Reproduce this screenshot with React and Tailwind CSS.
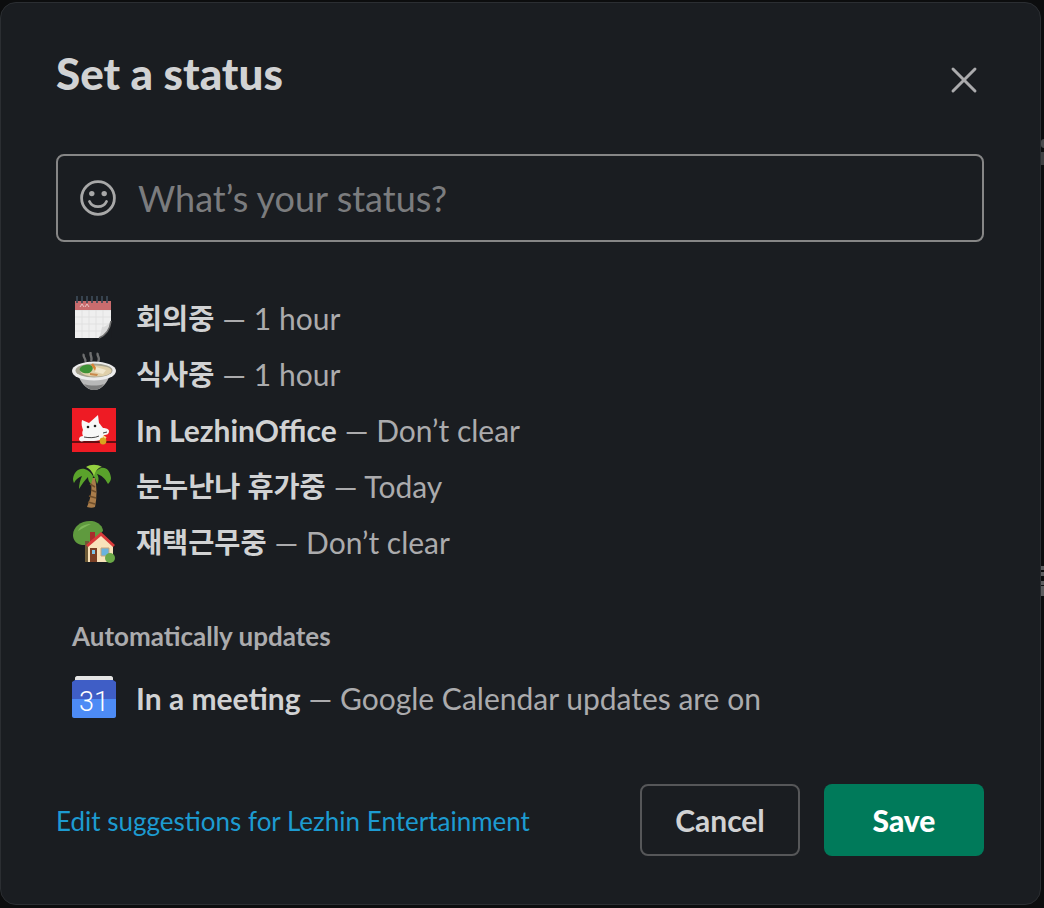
import React from "react";
import { X } from "lucide-react";

/* emoji drawings, 44x44 */
const CalendarIcon = () => (
  <svg viewBox="0 0 44 44" className="w-11 h-11">
    <path d="M3 5h36v37H3z" fill="#efefef" />
    <path d="M3 14h36M3 21h36M3 28h36M3 35h36M10 14v28M17 14v28M24 14v28M31 14v28" stroke="#dedede" strokeWidth="0.8" />
    <path d="M3 5h36v9H3z" fill="#c96c6e" />
    <path d="M8 11l2-3 2 3M13 11l2-3 2 3" stroke="#e9c4c4" strokeWidth="1" fill="none" />
    <path d="M5 0v7M10 0v7M15 0v7M20 0v7M25 0v7M30 0v7M35 0v7" stroke="#3d4a58" strokeWidth="1.7" />
    <path d="M39 25C38 33 34 39 27 42H39.500V25z" fill="#1a1d21" />
    <path d="M39 25C38 33 34 39 27 42C29 38 29 34 30 31C33 31 36 29 39 25z" fill="#dadada" />
    <path d="M39 25C38 33 34 39 27 42" stroke="#6f6f6f" strokeWidth="1.600" fill="none" />
  </svg>
);

const BowlIcon = () => (
  <svg viewBox="0 0 44 44" className="w-11 h-11">
    <path d="M12 2c-2 3 3 5 1 8M19 0c-2 3 2 5 0 9M26 1c-2 3 3 4 0 9" stroke="#8b8b8b" strokeWidth="2.4" fill="none" opacity="0.75" />
    <path d="M6 22c2 8 8 16 16 16s14-8 16-16z" fill="#b8b8b8" />
    <path d="M12 32c3 4 6 6 10 6s7-2 10-6c-6 2-14 2-20 0z" fill="#7d7d7d" />
    <ellipse cx="22" cy="19" rx="22" ry="9.500" fill="#ececec" />
    <ellipse cx="22" cy="18.500" rx="18.500" ry="7" fill="#a6a390" />
    <ellipse cx="24" cy="19" rx="15.500" ry="5.500" fill="#e0d0aa" />
    <path d="M8 16c3-4 9-4 12-2 2 2 0 6-3 7-4 1-11-1-9-5z" fill="#3f9337" />
    <path d="M20 12l4 6" stroke="#d98235" strokeWidth="2.4" />
    <path d="M24 15l10 3-3 4-8-2z" fill="#f1e7cd" />
    <path d="M18 21l8 1-1 2-7-1z" fill="#c98a4c" />
  </svg>
);

const LezhinIcon = () => (
  <svg viewBox="0 0 44 44" className="w-11 h-11">
    <path d="M0 0h44v44H0z" fill="#ee1b24" />
    <path d="M0 34h44" stroke="#3a0a0c" strokeWidth="1.4" />
    <path d="M10 12l7 3 9-8 1 8c2 2 3 4 4 5 3 0 6 1 6 3 0 3-2 4-5 4l-1 3c-2 2-5 3-9 3H12c-3 1-5 0-5-2 0-2 2-3 4-3-1-2-1-4 0-6-1-3-2-6-1-10z" fill="#f7f7f7" />
    <circle cx="16" cy="19" r="1.3" fill="#222222" />
    <circle cx="23" cy="18" r="1.3" fill="#222222" />
    <path d="M12 29c5 1 11 1 15-1M31 25l4-1" stroke="#444444" strokeWidth="1" fill="none" />
    <circle cx="31" cy="33" r="3.4" fill="#d9a51e" />
    <path d="M31 28l3 2" stroke="#f2e08a" strokeWidth="2" />
  </svg>
);

const PalmIcon = () => (
  <svg viewBox="0 0 44 44" className="w-11 h-11">
    <path d="M18 14c3 9 1 20-3 29c3 1 6 1 8 0c2-9 2-20 0-29z" fill="#a97c4a" />
    <path d="M18 20l5 3M19 26l5 2M17 32l7 2M16 38l7 2" stroke="#6f4e2a" strokeWidth="1.6" />
    <path d="M21 12C14 0 2 4 1 15c0 2 1 4 1 4 2-4 5-6 8-7-2 4-3 9-3 13 3-5 6-9 9-12 0 3 1 5 3 7 1-3 2-6 2-8 2 1 3 4 4 8 2-3 2-7 0-10 4 1 8 4 11 10 2-2 3-4 3-6C38 3 28-1 21 12z" fill="#5aa32b" />
    <path d="M14 3c5-3 11-3 16 0-3 0-6 3-8 9-2-5-5-8-8-9z" fill="#95d140" />
  </svg>
);

const HouseIcon = () => (
  <svg viewBox="0 0 44 44" className="w-11 h-11">
    <path d="M1 15C1 6 10 0 20 1c7 1 11 6 11 10l-14 14H10C4 24 1 20 1 15z" fill="#5f9a3e" />
    <path d="M6 11C8 6 13 4 19 4c-5 2-9 5-13 7z" fill="#7fb85a" />
    <path d="M13 21h4v21h-4z" fill="#6e5a36" />
    <path d="M18 12h5v10h-5z" fill="#a82c2c" />
    <path d="M16 24l13-11 12 11v18H16z" fill="#f8e2ba" />
    <path d="M14 25l15-13 14 13-2 2-12-11-13 11z" fill="#d93a3a" />
    <path d="M18 28h7v14h-7z" fill="#7a3f25" />
    <path d="M20 30h3v4h-3z" fill="#7cc3e8" />
    <path d="M29 28h8v8h-8z" fill="#6bb3dd" stroke="#c7a57a" />
    <circle cx="38" cy="38" r="5" fill="#6aa847" />
  </svg>
);

const GcalIcon = () => (
  <svg viewBox="0 0 44 44" className="w-11 h-11">
    <path d="M3 2c0-1 1-2 2-2h34c1 0 2 1 2 2v6H3z" fill="#e4e4e4" />
    <path d="M0 6l3-2h38l3 2v17H0z" fill="#3f5ec6" />
    <path d="M0 23h44v17c0 1-1 2-2 2H2c-1 0-2-1-2-2z" fill="#4d8bf5" />
    <text x="22" y="35" textAnchor="middle" fill="#ffffff" fontSize="27" fontWeight="300" fontFamily="Roboto, sans-serif">31</text>
  </svg>
);

const SmileIcon = () => (
  <svg viewBox="0 0 36 36" className="w-9 h-9 shrink-0" fill="none" stroke="#a8a8a8" strokeWidth="2.8">
    <circle cx="18" cy="18" r="16.4" />
    <circle cx="11.8" cy="13.6" r="2.7" fill="#a8a8a8" stroke="none" />
    <circle cx="24.2" cy="13.6" r="2.7" fill="#a8a8a8" stroke="none" />
    <path d="M9.5 21.5c1.600 3.400 4.800 5.200 8.500 5.200s6.900-1.800 8.500-5.200" strokeLinecap="round" />
  </svg>
);

const suggestions = [
  { icon: <CalendarIcon />, title: "회의중", note: "1 hour", ko: true },
  { icon: <BowlIcon />, title: "식사중", note: "1 hour", ko: true },
  { icon: <LezhinIcon />, title: "In LezhinOffice", note: "Don’t clear" },
  { icon: <PalmIcon />, title: "눈누난나 휴가중", note: "Today", ko: true },
  { icon: <HouseIcon />, title: "재택근무중", note: "Don’t clear", ko: true },
];

const StatusRow = ({ icon, title, note, ko }) => (
  <div className="flex items-center h-14 pl-4 text-[30px] leading-10">
    <span className="w-11 h-11 shrink-0 mr-5">{icon}</span>
    <span className={ko ? "text-[28.4px] font-bold text-[#d1d2d3]" : "font-bold text-[#d1d2d3]"}>{title}</span>
    <span className="text-[#ababad] ml-2">— {note}</span>
  </div>
);

export default function App() {
  return (
    <div className="relative w-[1044px] h-[908px] overflow-hidden bg-[#0c0d0e] pt-[2px] pr-[3px] pb-[3px] font-['Lato','Noto_Sans_CJK_KR',sans-serif]">
      <div className="h-full rounded-[16px] bg-[#1a1d21] border border-[#2b2e32] pl-[55px] pr-[56px] flex flex-col">
        <div className="flex items-start justify-between h-[151px] shrink-0">
          <h1 className="mt-[41px] text-[44px] leading-[58px] font-black text-[#d1d2d3]">Set a status</h1>
          <X className="mt-[55px] mr-[-2px] text-[#ababad]" size={44} strokeWidth={1.6} />
        </div>

        <div className="flex items-center h-[88px] shrink-0 rounded-lg border-2 border-[#868686] pl-[22px]">
          <SmileIcon />
          <span className="ml-[22px] text-[36px] text-[#7b7c7e]">What’s your status?</span>
        </div>

        <div className="mt-[48px] flex flex-col">
          {suggestions.map((s) => (
            <StatusRow key={s.title} {...s} />
          ))}
        </div>

        <div className="mt-[48px] pl-4 text-[26px] leading-9 font-bold text-[#ababad]">Automatically updates</div>

        <div className="mt-[16px]">
          <StatusRow icon={<GcalIcon />} title="In a meeting" note="Google Calendar updates are on" />
        </div>

        <div className="mt-[58px] flex items-center justify-between">
          <a className="mt-[2px] text-[26px] text-[#1d9bd1]">Edit suggestions for Lezhin Entertainment</a>
          <div className="flex gap-6">
            <button className="w-40 h-[72px] rounded-lg border-2 border-[#565759] text-[30px] font-bold text-[#d1d2d3]">Cancel</button>
            <button className="w-40 h-[72px] rounded-lg bg-[#007a5a] text-[30px] font-black text-white">Save</button>
          </div>
        </div>
      </div>

      {/* bits of the page behind, showing past the modal's right edge */}
      <span className="absolute right-0 top-[139px] w-[3px] h-[9px] rounded-l bg-[#4a4b4d]" />
      <span className="absolute right-0 top-[152px] w-[3px] h-[13px] bg-[#3f4042]" />
      <span className="absolute right-0 top-[566px] w-[3px] h-[4px] bg-[#5c5d5f]" />
      <span className="absolute right-0 top-[572px] w-[3px] h-[4px] bg-[#5c5d5f]" />
      <span className="absolute right-0 top-[581px] w-[3px] h-[4px] bg-[#5c5d5f]" />
      <span className="absolute right-0 top-[586px] w-[3px] h-[10px] bg-[#5c5d5f]" />
    </div>
  );
}
